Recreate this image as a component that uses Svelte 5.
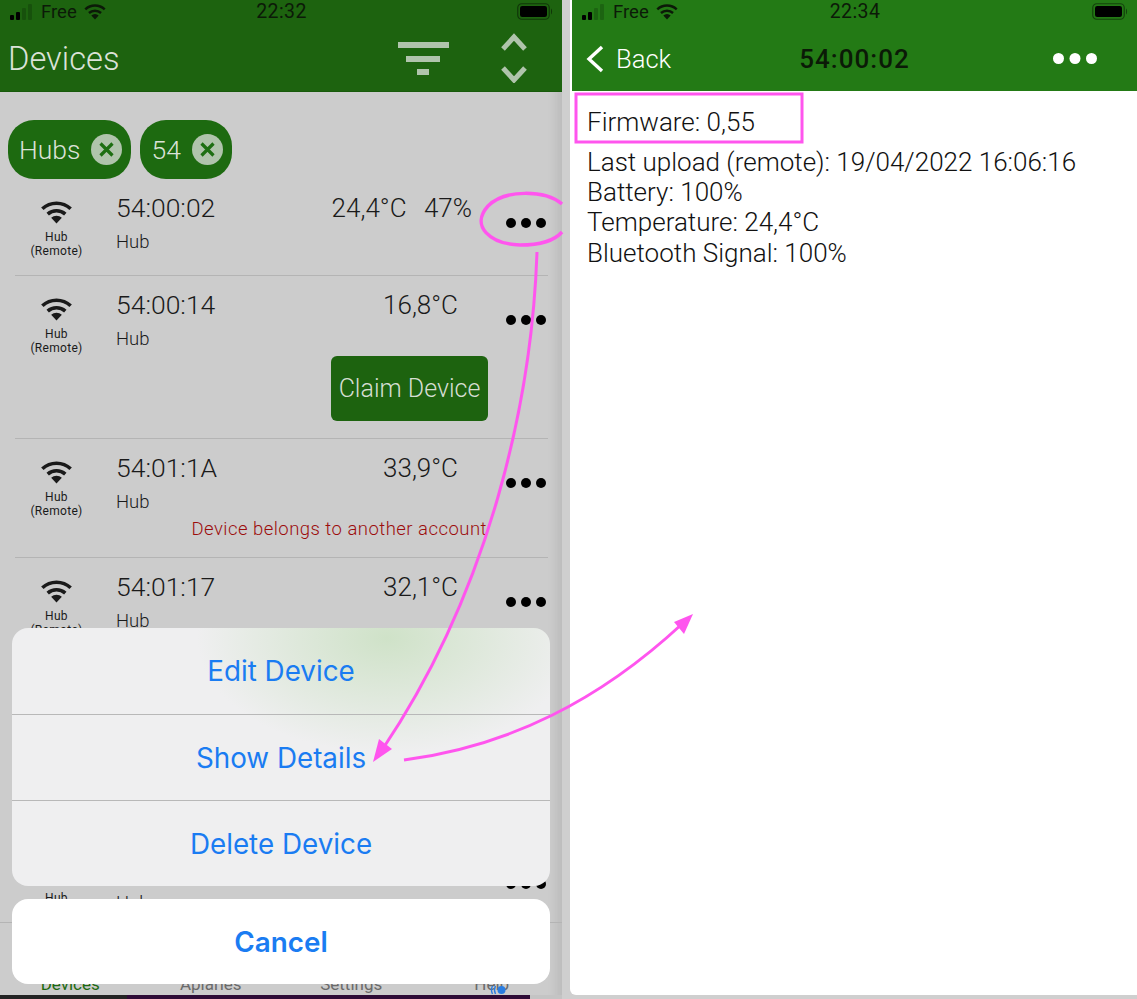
<script>
  const devices = [
    { id: '54:00:02', temp: '24,4°C', battery: '47%' },
    { id: '54:00:14', temp: '16,8°C', claim: true },
    { id: '54:01:1A', temp: '33,9°C', foreign: true },
    { id: '54:01:17', temp: '32,1°C', claim: true },
    { id: '54:01:20', temp: '28,7°C', foreign: true },
    { id: '54:01:22', temp: '30,2°C' }
  ];

  const actions = ['Edit Device', 'Show Details', 'Delete Device'];
  const tabs = ['Devices', 'Apiaries', 'Settings', 'Help'];
  const details = [
    'Last upload (remote): 19/04/2022 16:06:16',
    'Battery: 100%',
    'Temperature: 24,4°C',
    'Bluetooth Signal: 100%'
  ];
</script>

{#snippet wifi(width, height)}
  <svg {width} {height} viewBox="0 0 24 18" fill="none" stroke="currentColor" stroke-width="2.7">
    <path d="M1.4 6.6 A15.5 15.5 0 0 1 22.6 6.6" />
    <path d="M5.4 10.6 A10 10 0 0 1 18.6 10.6" />
    <path d="M12 17.6 L8 13.4 A5.6 5.6 0 0 1 16 13.4 Z" fill="currentColor" stroke="none" />
  </svg>
{/snippet}

{#snippet statusBar(time)}
  <div class="status">
    <div class="carrier">
      <svg width="24" height="16" viewBox="0 0 24 16" class="signal">
        <rect x="0" y="11" width="4" height="5" rx="1" fill="#000" />
        <rect x="6" y="8" width="4" height="8" rx="1" fill="#000" />
        <rect x="12" y="4" width="4" height="12" rx="1" fill="#000" opacity="0.18" />
        <rect x="18" y="0" width="4" height="16" rx="1" fill="#000" opacity="0.18" />
      </svg>
      <span>Free</span>
      {@render wifi(22, 17)}
    </div>
    <span class="time">{time}</span>
    <svg class="battery" width="36" height="17" viewBox="0 0 36 17">
      <rect x="0.75" y="0.75" width="31.5" height="15.5" rx="4" fill="none" stroke="#000" stroke-opacity="0.45" stroke-width="1.2" />
      <rect x="3" y="3" width="27" height="11" rx="2.2" fill="#000" />
      <path d="M34 5.5 C35.4 6 35.4 11 34 11.5 Z" fill="#000" fill-opacity="0.45" />
    </svg>
  </div>
{/snippet}

{#snippet dots(color, width = 40)}
  <svg {width} height={width / 4} viewBox="0 0 40 10" fill={color}>
    <circle cx="5" cy="5" r="5" />
    <circle cx="20" cy="5" r="5" />
    <circle cx="35" cy="5" r="5" />
  </svg>
{/snippet}

{#snippet closeIcon()}
  <svg width="31" height="31" viewBox="0 0 31 31">
    <circle cx="15.5" cy="15.5" r="15.5" fill="#b0c4ac" />
    <path d="M9.5 9.5 L21.5 21.5 M21.5 9.5 L9.5 21.5" stroke="#1d6f12" stroke-width="3.2" />
  </svg>
{/snippet}

<div class="page">
  <section class="phone list-phone">
    <header class="bar dim">
      {@render statusBar('22:32')}
      <div class="nav">
        <h1>Devices</h1>
        <div class="nav-icons">
          <svg width="52" height="34" viewBox="0 0 52 34" fill="#b0c4ac">
            <rect x="0" y="0" width="51" height="6" />
            <rect x="8" y="14" width="34" height="6" />
            <rect x="19" y="27" width="12" height="6" />
          </svg>
          <svg class="sort" width="26" height="50" viewBox="0 0 26 50" fill="none" stroke="#b0c4ac" stroke-width="5">
            <path d="M2 16 L13 4 L24 16" />
            <path d="M2 35 L13 47 L24 35" />
          </svg>
        </div>
      </div>
    </header>

    <div class="chips">
      <div class="chip">Hubs {@render closeIcon()}</div>
      <div class="chip">54 {@render closeIcon()}</div>
    </div>

    <div class="list">
      {#each devices as device}
        <div class="row">
          <div class="kind">
            {@render wifi(33, 24)}
            <span>Hub<br />(Remote)</span>
          </div>
          <div class="info">
            <div class="headline">
              <span>{device.id}</span>
              <span class="readings" class:with-battery={device.battery}>
                {device.temp}
                {#if device.battery}<span class="level">{device.battery}</span>{/if}
              </span>
            </div>
            <div class="type">Hub</div>
          </div>
          <div class="more">{@render dots('#000')}</div>
          {#if device.claim}
            <button class="claim">Claim Device</button>
          {/if}
          {#if device.foreign}
            <div class="foreign">Device belongs to another account</div>
          {/if}
        </div>
      {/each}
    </div>

    <nav class="tabs">
      {#each tabs as tab, i}
        <span class:active={i === 0}>{tab}</span>
      {/each}
    </nav>

    <div class="strip">
      <i class="s1"></i><i class="s2"></i><i class="s3"></i>
    </div>

    <svg class="help-badge" width="16" height="10" viewBox="0 0 16 10" fill="none" stroke="#2a7de1" stroke-width="1.4">
      <circle cx="11.5" cy="5" r="4" fill="#2a7de1" stroke="none" />
      <path d="M5.5 1 Q3.5 5 5.5 9" />
      <path d="M2.5 1 Q0.5 5 2.5 9" />
    </svg>

    <div class="sheet-wrap">
      <div class="sheet">
        {#each actions as action}
          <button>{action}</button>
        {/each}
      </div>
      <button class="cancel">Cancel</button>
    </div>
  </section>

  <section class="phone detail-phone">
    <header class="bar bright">
      {@render statusBar('22:34')}
      <div class="nav detail-nav">
        <div class="back">
          <svg width="18" height="28" viewBox="0 0 18 28" fill="none" stroke="#fff" stroke-width="3.4">
            <path d="M16 2 L3 14 L16 26" />
          </svg>
          Back
        </div>
        <div class="title">54:00:02</div>
        <div class="detail-more">{@render dots('#fff', 44)}</div>
      </div>
    </header>
    <div class="details">
      <p class="firmware">Firmware: 0,55</p>
      {#each details as line}
        <p>{line}</p>
      {/each}
    </div>
  </section>

  <!-- hand drawn annotations on top of both screens -->
  <svg class="notes" width="1137" height="999" viewBox="0 0 1137 999" fill="none" stroke="#ff55ee">
    <rect x="576" y="94" width="226" height="48" stroke-width="3" />
    <path d="M562 204 C545 190 505 189 488 206 C470 226 490 244 520 245 C540 245 555 240 562 232" stroke-width="3.5" />
    <path d="M537 252 C532 400 490 590 382 750" stroke-width="3" />
    <path d="M373 762 L379 739 L392 749 Z" fill="#ff55ee" stroke="none" />
    <path d="M404 760 C510 746 600 700 682 624" stroke-width="3" />
    <path d="M693 614 L684 634 L674 622 Z" fill="#ff55ee" stroke="none" />
  </svg>
</div>

<style>
  :global(body) {
    background: #cfcfcf;
  }

  .page {
    position: relative;
    display: flex;
    gap: 8px;
    width: 1137px;
    height: 999px;
    overflow: hidden;
    font-family: Roboto, "Liberation Sans", sans-serif;
  }

  .phone {
    position: relative;
    display: flex;
    flex-direction: column;
  }

  .list-phone {
    width: 562px;
    height: 999px;
    background: #cccccc;
    box-shadow: inset -12px 0 10px -6px rgba(0, 0, 0, 0.08);
  }

  .detail-phone {
    flex: 1;
    height: 995px;
    background: #fff;
    border-radius: 0 0 0 6px;
    padding-left: 2px;
  }

  .bar {
    height: 91px;
    flex: none;
  }

  .dim {
    background: #1d630f;
    border-bottom: 1px solid #185a0c;
    box-sizing: border-box;
    height: 92px;
  }

  .bright {
    background: #237a15;
  }

  .status {
    display: grid;
    grid-template-columns: 1fr auto 1fr;
    align-items: center;
    height: 22px;
    padding: 0 9px 0 10px;
    color: #0c1a08;
    font-size: 18.5px;
  }

  .carrier {
    display: flex;
    align-items: center;
    gap: 7px;
  }

  .time {
    font-size: 19.5px;
    letter-spacing: 0.4px;
  }

  .battery {
    justify-self: end;
  }

  .nav {
    display: flex;
    align-items: center;
    justify-content: space-between;
    height: 69px;
    padding: 4px 35px 0 8px;
    box-sizing: border-box;
  }

  h1 {
    margin: 0;
    font-size: 32.7px;
    font-weight: 300;
    color: #dbe2d8;
  }

  .nav-icons {
    display: flex;
    align-items: center;
    gap: 51px;
  }

  .sort {
    margin-top: -2px;
  }

  .chips {
    display: flex;
    gap: 9px;
    padding: 28px 0 0 8px;
    flex: none;
  }

  .chip {
    display: flex;
    align-items: center;
    gap: 11px;
    height: 59px;
    padding: 0 9px 0 11px;
    border-radius: 26px;
    box-sizing: border-box;
    background: #1d6a10;
    color: #dbe2d8;
    font-size: 26.5px;
    font-weight: 300;
  }

  .list {
    flex: 1;
    min-height: 0;
    overflow: hidden;
    color: #1a1a1a;
  }

  .row {
    display: grid;
    grid-template-columns: 101px 356px 76px;
    margin: 0 14px 0 15px;
    padding: 14px 0 17px;
    border-bottom: 1px solid #b4b4b4;
  }

  .row:last-child {
    border-bottom: none;
  }

  .kind {
    display: flex;
    flex-direction: column;
    align-items: center;
    box-sizing: border-box;
    width: 83px;
    height: 65px;
    padding-top: 7px;
    font-size: 12px;
    line-height: 14px;
    text-align: center;
    letter-spacing: 0.3px;
  }

  .kind span {
    margin-top: 6px;
  }

  .headline {
    display: flex;
    justify-content: space-between;
    font-size: 26.5px;
    line-height: 30px;
    font-weight: 300;
  }

  .readings {
    margin-right: 14px;
    font-size: 26px;
  }

  .readings.with-battery {
    margin-right: 0;
  }

  .level {
    margin-left: 11px;
  }

  .type {
    margin-top: 8px;
    font-size: 18.5px;
    line-height: 22px;
    font-weight: 300;
  }

  .more {
    display: flex;
    justify-content: flex-end;
    padding: 25px 2px 0 0;
  }

  .claim {
    grid-column: 1 / -1;
    justify-self: end;
    width: 157px;
    height: 65px;
    margin: 1px 60px 0 0;
    padding: 0;
    border: none;
    border-radius: 6px;
    background: #1d630f;
    color: #d6ded3;
    font-family: inherit;
    font-size: 25px;
    font-weight: 300;
  }

  .foreign {
    grid-column: 1 / -1;
    justify-self: end;
    margin-right: 61px;
    color: #9c0c0c;
    font-size: 18.5px;
    line-height: 22px;
    font-weight: 300;
    letter-spacing: 0.47px;
  }

  .tabs {
    display: grid;
    grid-template-columns: repeat(4, 1fr);
    align-items: end;
    height: 73px;
    flex: none;
    padding-bottom: 2px;
    border-top: 1px solid #b4b4b4;
    box-sizing: border-box;
    font-size: 17px;
    line-height: 18px;
    text-align: center;
    color: #6a6a6a;
  }

  .tabs .active {
    color: #1d6a10;
  }

  .strip {
    display: flex;
    height: 4px;
    flex: none;
  }

  .strip i {
    display: block;
    height: 100%;
  }

  .s1 {
    width: 127px;
    background: #232323;
  }

  .s2 {
    width: 403px;
    background: #2e0b36;
  }

  .s3 {
    flex: 1;
    background: #c4c4c4;
  }

  .help-badge {
    position: absolute;
    left: 490px;
    top: 985px;
  }

  .sheet-wrap {
    position: absolute;
    left: 12px;
    right: 12px;
    bottom: 15px;
    display: flex;
    flex-direction: column;
    gap: 13px;
  }

  .sheet {
    display: flex;
    flex-direction: column;
    border-radius: 16px;
    overflow: hidden;
    background:
      radial-gradient(ellipse 190px 115px at 375px 10px, #cfe2c8 0%, rgba(207, 226, 200, 0) 100%),
      #efeff0;
  }

  .sheet button,
  .cancel {
    height: 86px;
    border: none;
    background: transparent;
    color: #1a7cf2;
    font-family: Inter, Roboto, sans-serif;
    font-size: 27.8px;
    font-weight: 400;
    padding: 0;
  }

  .sheet button + button {
    border-top: 1px solid #b8b8b8;
  }

  .cancel {
    height: 85px;
    background: #fff;
    border-radius: 16px;
    font-weight: 600;
  }

  .detail-nav {
    display: grid;
    grid-template-columns: 1fr auto 1fr;
    padding: 4px 14px 0 14px;
  }

  .back {
    display: flex;
    align-items: center;
    gap: 12px;
    color: #fff;
    font-size: 25.6px;
    font-weight: 300;
  }

  .title {
    color: #0b1a07;
    font-size: 26px;
    font-weight: 500;
    letter-spacing: 1px;
  }

  .detail-more {
    display: flex;
    justify-content: flex-end;
    padding-right: 26px;
  }

  .details {
    padding: 16px 15px;
    color: #111;
    font-size: 26px;
    font-weight: 300;
    line-height: 30.3px;
  }

  .details p {
    margin: 0;
  }

  .details .firmware {
    margin-bottom: 9.6px;
  }

  .notes {
    position: absolute;
    left: 0;
    top: 0;
    pointer-events: none;
  }
</style>
